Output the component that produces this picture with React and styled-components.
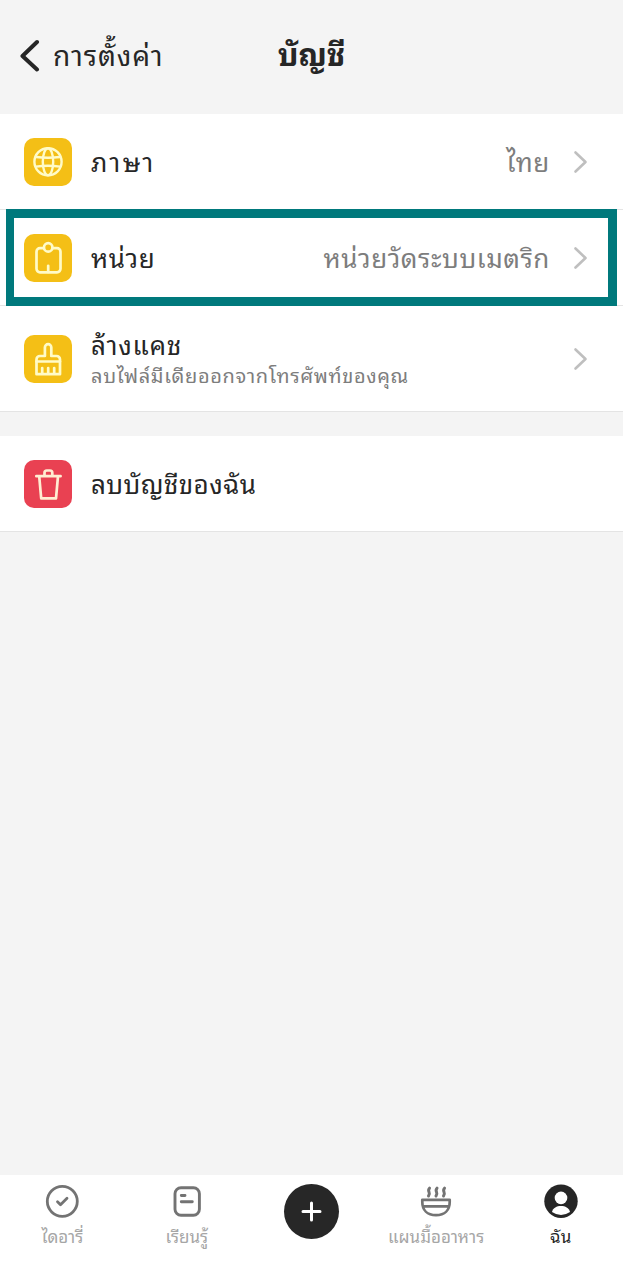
import React from 'react';
import styled, { createGlobalStyle } from 'styled-components';

const GlobalStyle = createGlobalStyle`
    * {
        box-sizing: border-box;
    }
    body {
        margin: 0;
        background-color: #f4f4f4;
        font-family: "Noto Sans Thai Looped", "Noto Sans Thai", "Loma", "Noto Sans", "Liberation Sans", sans-serif;
        color: #262626;
    }
`;

const Screen = styled.div`
    display: flex;
    flex-direction: column;
    width: 623px;
    height: 1280px;
    overflow: hidden;
`;

const Header = styled.header`
    display: grid;
    grid-template-columns: 1fr auto 1fr;
    align-items: center;
    height: 114px;
    padding: 0 19px 4px;
`;

const BackButton = styled.button`
    display: flex;
    align-items: center;
    gap: 13px;
    padding: 0;
    border: 0;
    background: none;
    color: inherit;
    font-family: inherit;
`;

const Label = styled.span`
    font-size: ${props => props.$size || 26}px;
    line-height: ${props => props.$line || 36}px;
    letter-spacing: ${props => props.$spacing || 0}px;
    color: ${props => props.$color || '#262626'};
    white-space: nowrap;
`;

const BackLabel = styled(Label)`
    padding-bottom: 3px;
`;

const Title = styled.h1`
    margin: 0;
    padding-bottom: 7px;
    font-size: 31px;
    line-height: 40px;
    font-weight: 700;
    white-space: nowrap;
`;

const Group = styled.section`
    margin-bottom: 24px;
    background-color: #fff;
`;

const Row = styled.div`
    position: relative;
    display: flex;
    align-items: center;
    height: ${props => props.$height || 96}px;
    padding: 0 35px 0 24px;
    border-bottom: 1px solid #e4e4e4;
`;

const Highlight = styled.div`
    position: absolute;
    top: -1px;
    right: 6px;
    bottom: -1px;
    left: 6px;
    border: 9px solid #00797c;
    border-left-width: 8px;
    pointer-events: none;
`;

const IconTile = styled.div`
    flex: none;
    width: 48px;
    height: 48px;
    margin-right: 19px;
    border-radius: 10px;
    background-color: ${props => props.$color || '#f4bf16'};

    svg {
        display: block;
    }
`;

const RowText = styled.div`
    display: flex;
    flex: 1;
    flex-direction: column;
    padding-bottom: ${props => (props.$stacked ? 0 : 3)}px;
`;

const RowEnd = styled.div`
    display: flex;
    align-items: center;
    gap: 23px;
`;

const Value = styled(Label)`
    padding-bottom: 3px;
`;

const TabBar = styled.nav`
    display: grid;
    grid-template-columns: repeat(5, 1fr);
    height: 105px;
    margin-top: auto;
    background-color: #fff;
`;

const Tab = styled.div`
    display: flex;
    flex-direction: column;
    align-items: center;
    padding-top: 9px;
`;

const AddButton = styled.button`
    display: block;
    width: 55px;
    height: 55px;
    padding: 0;
    border: 0;
    border-radius: 50%;
    background-color: #272727;
`;

const Glyph = ({children, size = 48, stroke = '#fffbc8', width = 2.7}) => (
    <svg
        width={size}
        height={size}
        viewBox={`0 0 ${size} ${size}`}
        fill="none"
        stroke={stroke}
        strokeWidth={width}
        strokeLinecap="round"
        strokeLinejoin="round"
    >
        {children}
    </svg>
);

const GlobeIcon = () => (
    <Glyph width={2.4}>
        <circle cx="24" cy="23.8" r="13.6" />
        <ellipse cx="24" cy="23.8" rx="5.2" ry="13.6" />
        <path d="M24 10.2v27.2" strokeWidth="0" />
        <path d="M12 19q12 1.600 24 0M12 28.600q12-1.600 24 0" />
    </Glyph>
);

const UnitsIcon = () => (
    <Glyph>
        <path d="M19.500 14.200H16a3.500 3.500 0 0 0-3.500 3.500v17.100a3.500 3.500 0 0 0 3.500 3.500h17a3.500 3.500 0 0 0 3.500-3.500V17.700a3.500 3.500 0 0 0-3.500-3.500h-4" />
        <circle cx="24.200" cy="13.400" r="4.200" />
        <path d="M24.200 31.800v6.200" />
    </Glyph>
);

const BrushIcon = () => (
    <Glyph>
        <path d="M12.500 39.200V24.500a3.500 3.500 0 0 1 3.500-3.500h4.900v-8.600a3.200 3.200 0 0 1 6.400 0V21h5.200a3.500 3.500 0 0 1 3.500 3.500v14.700z" />
        <path d="M12.500 26.500h23.500M18.200 33v5.500M24.200 33v5.500M30.200 33v5.500" />
    </Glyph>
);

const TrashIcon = () => (
    <Glyph stroke="#ffedd2">
        <path d="M12.300 16.200h24.300M15.200 16.200l2 22.200h14.800l2-22.200M20.500 15.800v-3a2.300 2.300 0 0 1 2.300-2.300h3.200a2.300 2.300 0 0 1 2.300 2.300v3" />
    </Glyph>
);

const Chevron = () => (
    <svg width="15" height="24" viewBox="0 0 15 24" fill="none" stroke="#bfbfbf" strokeWidth="2.600" strokeLinecap="round" strokeLinejoin="round">
        <path d="M2.500 2.500l10 9.500-10 9.500" />
    </svg>
);

const BackChevron = () => (
    <svg width="21" height="34" viewBox="0 0 21 34" fill="none" stroke="#262626" strokeWidth="4" strokeLinecap="round" strokeLinejoin="round">
        <path d="M18 4L3.500 18 18 31.500" />
    </svg>
);

const DiaryIcon = () => (
    <Glyph size={34} stroke="#737373" width={2.800}>
        <circle cx="17.300" cy="17.300" r="15" />
        <path d="M12.500 17.800l3 3 6.500-6.500" />
    </Glyph>
);

const LearnIcon = () => (
    <Glyph size={34} stroke="#737373" width={2.900}>
        <rect x="5" y="3.700" width="24.400" height="27.600" rx="6" />
        <path d="M11.300 11.500h3.700M11.300 17.700h11" />
    </Glyph>
);

const BowlIcon = () => (
    <Glyph size={34} stroke="#737373" width={2.700}>
        <path d="M3.300 15.800h27.400v2.200c0 8-5 13.200-13.700 13.200S3.300 26 3.300 18zM4.500 22.300h25" />
        <path d="M10.500 4.200c-3 3.200 2 4 -1 7.800M18 4.200c-3 3.200 2 4 -1 7.800M25.500 4.200c-3 3.200 2 4 -1 7.800" strokeWidth="3" />
    </Glyph>
);

const ProfileIcon = () => (
    <Glyph size={34} stroke="none">
        <circle cx="17" cy="17.200" r="16.700" fill="#262626" />
        <circle cx="17" cy="13.900" r="6.300" fill="#fff" />
        <path d="M8 28c1-4.300 4.800-6 9-6s8 1.700 9 6q-9 6-18 0z" fill="#fff" />
    </Glyph>
);

const SettingRow = ({icon, color, height, highlighted, title, titleSpacing, subtitle, value, valueSpacing, arrow = true}) => (
    <Row $height={height}>
        <IconTile $color={color}>{icon}</IconTile>
        <RowText $stacked={!!subtitle}>
            <Label $spacing={titleSpacing} $line={subtitle ? 30 : 36}>{title}</Label>
            {subtitle && <Label $size={20} $line={32} $spacing={0.65} $color="#7d7d7d">{subtitle}</Label>}
        </RowText>
        <RowEnd>
            {value && <Value $color="#7d7d7d" $spacing={valueSpacing}>{value}</Value>}
            {arrow && <Chevron />}
        </RowEnd>
        {highlighted && <Highlight />}
    </Row>
);

const NavTab = ({icon, label, active}) => (
    <Tab>
        {icon}
        <Label $size={17} $line={35} $color={active ? '#262626' : '#a6a6a6'}>{label}</Label>
    </Tab>
);

const App = () => (
    <Screen>
        <GlobalStyle />
        <Header>
            <BackButton>
                <BackChevron />
                <BackLabel $size={28} $spacing={1}>การตั้งค่า</BackLabel>
            </BackButton>
            <Title>บัญชี</Title>
        </Header>
        <Group>
            <SettingRow icon={<GlobeIcon />} title="ภาษา" titleSpacing={2.3} value="ไทย" valueSpacing={0.7} />
            <SettingRow
                icon={<UnitsIcon />}
                title="หน่วย"
                titleSpacing={0.6}
                value="หน่วยวัดระบบเมตริก"
                valueSpacing={0.6}
                highlighted
            />
            <SettingRow
                icon={<BrushIcon />}
                title="ล้างแคช"
                titleSpacing={0.8}
                subtitle="ลบไฟล์มีเดียออกจากโทรศัพท์ของคุณ"
                height={106}
            />
        </Group>
        <Group>
            <SettingRow icon={<TrashIcon />} color="#e94152" title="ลบบัญชีของฉัน" titleSpacing={0.4} arrow={false} />
        </Group>
        <TabBar>
            <NavTab icon={<DiaryIcon />} label="ไดอารี่" />
            <NavTab icon={<LearnIcon />} label="เรียนรู้" />
            <Tab>
                <AddButton>
                    <Glyph size={55} stroke="#fff" width={3}>
                        <path d="M27.500 19v17M19 27.500h17" />
                    </Glyph>
                </AddButton>
            </Tab>
            <NavTab icon={<BowlIcon />} label="แผนมื้ออาหาร" />
            <NavTab icon={<ProfileIcon />} label="ฉัน" active />
        </TabBar>
    </Screen>
);

export default App;
